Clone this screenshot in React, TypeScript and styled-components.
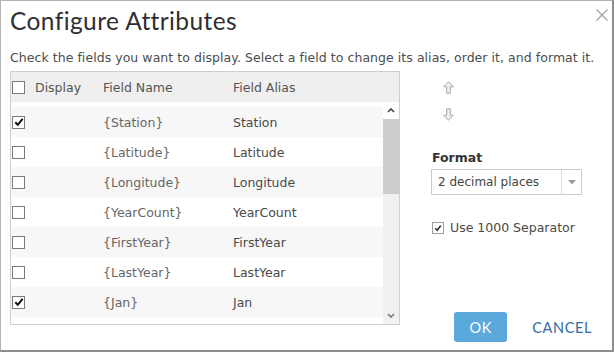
import React from "react";
import styled, { createGlobalStyle } from "styled-components";

const GlobalStyle = createGlobalStyle`
  html, body { margin: 0; padding: 0; background: #ffffff; }
  body { width: 614px; height: 352px; overflow: hidden; }
  * { box-sizing: border-box; }
`;

const Dialog = styled.div`
  width: 614px;
  height: 352px;
  border-style: solid;
  border-color: #b4b4b4 #8e8e8e #8e8e8e #b4b4b4;
  border-width: 1px 2px 2px 1px;
  background: #fff;
  display: flex;
  flex-direction: column;
  padding-left: 9px;
  font-family: "DejaVu Sans", Verdana, sans-serif;
  color: #4a4a4a;
`;

const TitleBar = styled.div`
  display: flex;
  align-items: flex-start;
  justify-content: space-between;
  margin-top: 5px;
`;

const Title = styled.h1`
  margin: 0;
  font-family: Lato, "Noto Sans", sans-serif;
  font-weight: 400;
  font-size: 24.5px;
  line-height: 29px;
  color: #2f2f33;
  letter-spacing: 0.4px;
`;

const CloseButton = styled.button`
  border: 0;
  background: none;
  padding: 0;
  margin: 3px 4px 0 0;
  width: 12px;
  height: 12px;
  display: flex;
  cursor: pointer;
`;

const Description = styled.p`
  margin: 15px 0 0 0;
  font-size: 12.5px;
  line-height: 15px;
  letter-spacing: 0.05px;
  color: #4d4d4d;
  white-space: nowrap;
`;

const Content = styled.div`
  flex: 1;
  display: flex;
  margin-top: 6px;
`;

const TableBox = styled.div`
  width: 390px;
  height: 254px;
  border: 1px solid #cfcfcf;
  display: flex;
  flex-direction: column;
  background: #fff;
`;

const Grid = styled.div`
  display: grid;
  grid-template-columns: 91px 130px 1fr;
  align-items: center;
  padding-left: 1px;
`;

const HeaderRow = styled(Grid)`
  height: 30px;
  background: #efefef;
  color: #555;
  font-size: 12.5px;
`;

const DisplayCell = styled.div`
  display: flex;
  align-items: center;
  gap: 10px;
`;

const Body = styled.div`
  flex: 1;
  display: flex;
  min-height: 0;
`;

const RowList = styled.div`
  flex: 1;
  overflow: hidden;
  padding-top: 5px;
`;

const Row = styled(Grid)<{ $shaded: boolean }>`
  height: 30px;
  background: ${(p) => (p.$shaded ? "#f7f7f7" : "#ffffff")};
  font-size: 12.5px;
`;

const FieldName = styled.span`
  color: #666;
`;

const FieldAlias = styled.span`
  color: #4a4a4a;
`;

const Box = styled.span<{ $small?: boolean }>`
  width: ${(p) => (p.$small ? "12px" : "13px")};
  height: ${(p) => (p.$small ? "12px" : "13px")};
  border: 1px solid ${(p) => (p.$small ? "#a0a0a0" : "#7a7a7a")};
  background: #fff;
  display: inline-flex;
  align-items: center;
  justify-content: center;
  flex: none;
`;

const Scrollbar = styled.div`
  width: 16px;
  display: flex;
  flex-direction: column;
  background: #f1f1f1;
`;

const ScrollButton = styled.div<{ $light?: boolean }>`
  height: 17px;
  display: flex;
  align-items: center;
  justify-content: center;
  background: ${(p) => (p.$light ? "#ffffff" : "#f1f1f1")};
`;

const Track = styled.div`
  flex: 1;
  display: flex;
  flex-direction: column;
`;

const Thumb = styled.div<{ $top: number; $size: number }>`
  margin-top: ${(p) => p.$top}px;
  height: ${(p) => p.$size}px;
  background: #cdcdcd;
`;

const SidePanel = styled.div`
  flex: 1;
  display: flex;
  flex-direction: column;
  padding-left: 31px;
`;

const MoveButtons = styled.div`
  display: flex;
  flex-direction: column;
  gap: 14px;
  margin: 10px 0 0 12px;
`;

const IconButton = styled.button`
  border: 0;
  background: none;
  padding: 0;
  width: 11px;
  height: 13px;
  display: flex;
  cursor: pointer;
`;

const Label = styled.div`
  margin-top: 29px;
  font-weight: 700;
  font-size: 12.5px;
  line-height: 15px;
  color: #333;
  padding-left: 1px;
`;

const Select = styled.div`
  margin-top: 4px;
  width: 151px;
  height: 26px;
  border: 1px solid #cccccc;
  display: flex;
  align-items: stretch;
  font-size: 12px;
  color: #444;
`;

const SelectValue = styled.div`
  flex: 1;
  display: flex;
  align-items: center;
  padding-left: 6px;
`;

const SelectCaret = styled.div`
  width: 20px;
  border-left: 1px solid #dddddd;
  display: flex;
  align-items: center;
  justify-content: center;
`;

const CheckRow = styled.label`
  margin-top: 25px;
  display: flex;
  align-items: center;
  gap: 6px;
  font-size: 12.5px;
  color: #4a4a4a;
  padding-left: 1px;
`;

const Footer = styled.div`
  margin-top: auto;
  margin-bottom: 8px;
  display: flex;
  align-items: center;
  justify-content: flex-end;
  padding-right: 8px;
  gap: 13px;
`;

const OkButton = styled.button`
  width: 53px;
  height: 30px;
  border: 0;
  border-radius: 3px;
  background: #5aa8dc;
  color: #fff;
  font-family: Lato, "Noto Sans", sans-serif;
  font-size: 14.5px;
  letter-spacing: 0.6px;
  cursor: pointer;
`;

const CancelButton = styled.button`
  border: 0;
  background: none;
  padding: 0 12px;
  height: 30px;
  color: #2f6da6;
  font-family: Lato, "Noto Sans", sans-serif;
  font-size: 14.5px;
  letter-spacing: 0.6px;
  cursor: pointer;
`;

const CheckMark = ({ small }: { small?: boolean }) =>
  small ? (
    <svg width="8" height="8" viewBox="0 0 8 8">
      <path d="M1.2 4.2 L3.2 6.2 L6.8 1.6" fill="none" stroke="#333" strokeWidth="1.6" />
    </svg>
  ) : (
    <svg width="10" height="10" viewBox="0 0 10 10">
      <path d="M1.3 5.2 L3.8 7.8 L8.6 1.8" fill="none" stroke="#111" strokeWidth="2" />
    </svg>
  );

const Checkbox = ({ checked, small }: { checked?: boolean; small?: boolean }) => (
  <Box $small={small}>{checked ? <CheckMark small={small} /> : null}</Box>
);

const ArrowIcon = ({ down }: { down?: boolean }) => (
  <svg width="11" height="13" viewBox="0 0 11 13">
    <path
      d="M5.5 0.7 L10.3 5.8 H7.3 V12.3 H3.7 V5.8 H0.7 Z"
      fill="#eeeeee"
      stroke="#a9a9a9"
      strokeWidth="1"
      strokeLinejoin="round"
      transform={down ? "rotate(180 5.5 6.5)" : undefined}
    />
  </svg>
);

const Chevron = ({ down }: { down?: boolean }) => (
  <svg width="8" height="5" viewBox="0 0 8 5">
    <path
      d={down ? "M1 1 L4 4 L7 1" : "M1 4 L4 1 L7 4"}
      fill="none"
      stroke={down ? "#777" : "#444"}
      strokeWidth="1.6"
    />
  </svg>
);

const fields = [
  { name: "Station", checked: true },
  { name: "Latitude", checked: false },
  { name: "Longitude", checked: false },
  { name: "YearCount", checked: false },
  { name: "FirstYear", checked: false },
  { name: "LastYear", checked: false },
  { name: "Jan", checked: true },
];

export default function App() {
  return (
    <>
      <GlobalStyle />
      <Dialog>
        <TitleBar>
          <Title>Configure Attributes</Title>
          <CloseButton aria-label="Close">
            <svg width="12" height="12" viewBox="0 0 12 12">
              <path d="M0.5 0.5 L11.5 11.5 M11.5 0.5 L0.5 11.5" stroke="#a3a3a3" strokeWidth="1.3" />
            </svg>
          </CloseButton>
        </TitleBar>
        <Description>
          Check the fields you want to display. Select a field to change its alias, order it, and format it.
        </Description>
        <Content>
          <TableBox>
            <HeaderRow>
              <DisplayCell>
                <Checkbox />
                <span>Display</span>
              </DisplayCell>
              <span>Field Name</span>
              <span>Field Alias</span>
            </HeaderRow>
            <Body>
              <RowList>
                {fields.map((f, i) => (
                  <Row key={f.name} $shaded={i % 2 === 0}>
                    <DisplayCell>
                      <Checkbox checked={f.checked} />
                    </DisplayCell>
                    <FieldName>{`{${f.name}}`}</FieldName>
                    <FieldAlias>{f.name}</FieldAlias>
                  </Row>
                ))}
              </RowList>
              <Scrollbar>
                <ScrollButton $light>
                  <Chevron />
                </ScrollButton>
                <Track>
                  <Thumb $top={0} $size={75} />
                </Track>
                <ScrollButton>
                  <Chevron down />
                </ScrollButton>
              </Scrollbar>
            </Body>
          </TableBox>
          <SidePanel>
            <MoveButtons>
              <IconButton aria-label="Move up">
                <ArrowIcon />
              </IconButton>
              <IconButton aria-label="Move down">
                <ArrowIcon down />
              </IconButton>
            </MoveButtons>
            <Label>Format</Label>
            <Select>
              <SelectValue>2 decimal places</SelectValue>
              <SelectCaret>
                <svg width="8" height="5" viewBox="0 0 8 5">
                  <path d="M0 0 H8 L4 4.5 Z" fill="#9a9a9a" />
                </svg>
              </SelectCaret>
            </Select>
            <CheckRow>
              <Checkbox checked small />
              <span>Use 1000 Separator</span>
            </CheckRow>
            <Footer>
              <OkButton>OK</OkButton>
              <CancelButton>CANCEL</CancelButton>
            </Footer>
          </SidePanel>
        </Content>
      </Dialog>
    </>
  );
}
